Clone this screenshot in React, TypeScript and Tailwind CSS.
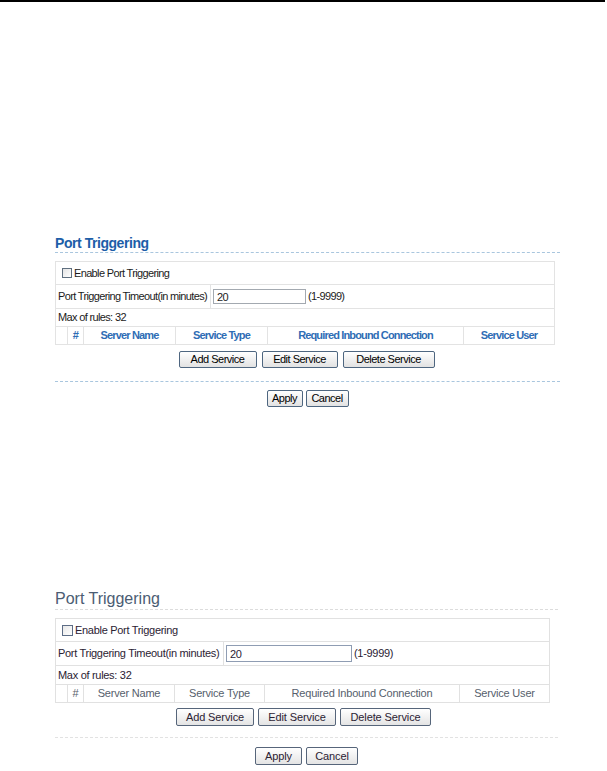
import type { ReactNode } from 'react'

type Look = {
  wrap: string
  title: string
  table: string
  text: string
  head: string
  cols: string
  labelCell: string
  input: string
  btnRow: string
  btn: string
  rule: string
  applyRow: string
  widths: { add: string; edit: string; del: string; apply: string; cancel: string }
  rows: { enable: string; timeout: string; max: string; head: string }
  check: string
  cell: string
}

const top: Look = {
  wrap: 'mt-[234px] w-[505px]',
  title:
    "h-[17px] border-b border-dashed border-[#a9c6de] font-['Liberation_Sans',Arial,sans-serif] text-[14px] font-bold leading-[14px] tracking-[-0.45px] text-[#1d5ea8]",
  table: 'mt-[8px] w-[500px] border border-[#e3e3e3]',
  text: "font-['Liberation_Sans',Arial,sans-serif] text-[11px] tracking-[-0.65px] text-[#1b1b1b]",
  head: "font-['Liberation_Sans',Arial,sans-serif] text-[11px] font-bold tracking-[-0.85px] text-[#2f6db5]",
  cols: 'grid grid-cols-[11px_16px_92px_92px_196px_1fr]',
  labelCell: 'w-[155px]',
  input: 'ml-[2px] h-[15px] w-[93px] border border-[#a3a9b0] px-[3px] text-[11px] leading-[13px]',
  btnRow: 'mt-[6px] flex w-[500px] justify-center gap-[5px] pl-[3px]',
  btn: "h-[17px] rounded-[2px] border border-[#4e6680] bg-gradient-to-b from-white to-[#e2e2e2] font-['Liberation_Sans',Arial,sans-serif] text-[11px] leading-[15px] tracking-[-0.5px] text-black",
  rule: 'mt-[13px] border-t border-dashed border-[#a9c6de]',
  applyRow: 'mt-[8px] flex justify-center gap-[3px]',
  widths: { add: 'w-[78px]', edit: 'w-[76px]', del: 'w-[92px]', apply: 'w-[36px]', cancel: 'w-[43px]' },
  rows: { enable: 'h-[22px]', timeout: 'h-[24px]', max: 'h-[18px]', head: 'h-[18px]' },
  check: 'h-[10px] w-[10px] border border-[#5f6f7f] bg-gradient-to-br from-[#e4e4e4] to-white',
  cell: 'border-[#e3e3e3]',
}

const bottom: Look = {
  wrap: 'mt-[183px] w-[503px]',
  title:
    "h-[20px] border-b border-dashed border-[#dcdcdc] font-['Liberation_Sans',Arial,sans-serif] text-[16px] leading-[18px] tracking-[0px] text-[#4b5d73]",
  table: 'mt-[8px] w-[495px] border border-[#e1e1e1]',
  text: "font-['Liberation_Sans',Arial,sans-serif] text-[11px] tracking-[-0.3px] text-[#2b2233]",
  head: "font-['Liberation_Sans',Arial,sans-serif] text-[11px] tracking-[-0.2px] text-[#56606c]",
  cols: 'grid grid-cols-[11px_16px_91px_90px_195px_1fr]',
  labelCell: 'w-[168px]',
  input: 'ml-[2px] h-[17px] w-[126px] border border-[#8f9db3] px-[3px] text-[11px] leading-[15px]',
  btnRow: 'mt-[5px] flex w-[495px] justify-center gap-[4px] pl-[2px]',
  btn: "h-[18px] rounded-[2px] border border-[#56657a] bg-gradient-to-b from-white to-[#e4e4e4] font-['Liberation_Sans',Arial,sans-serif] text-[11px] leading-[16px] tracking-[-0.1px] text-[#2b2233]",
  rule: 'mt-[11px] border-t border-dashed border-[#e2e2e2]',
  applyRow: 'mt-[9px] flex justify-center gap-[4px]',
  widths: { add: 'w-[78px]', edit: 'w-[78px]', del: 'w-[91px]', apply: 'w-[47px]', cancel: 'w-[52px]' },
  rows: { enable: 'h-[22px]', timeout: 'h-[24px]', max: 'h-[19px]', head: 'h-[18px]' },
  check: 'h-[11px] w-[11px] border border-[#5d6d86] bg-gradient-to-br from-[#e8e8e8] to-white',
  cell: 'border-[#e1e1e1]',
}

function Btn({ look, w, children }: { look: Look; w: string; children: ReactNode }) {
  return (
    <button type="button" className={`${look.btn} ${w}`}>
      {children}
    </button>
  )
}

function Panel({ look }: { look: Look }) {
  return (
    <section className={`ml-[55px] ${look.wrap}`}>
      <div className={look.title}>Port Triggering</div>
      <div className={look.table}>
        <div className={`flex items-center gap-[2px] pl-[6px] ${look.rows.enable} ${look.text}`}>
          <span className={look.check} />
          <span>Enable Port Triggering</span>
        </div>
        <div className={`flex items-center border-t ${look.cell} ${look.rows.timeout} ${look.text}`}>
          <div className={`flex h-full items-center border-r pl-[2px] ${look.cell} ${look.labelCell}`}>
            Port Triggering Timeout(in minutes)
          </div>
          <input className={`${look.input} ${look.text}`} defaultValue="20" readOnly />
          <span className="ml-[2px]">(1-9999)</span>
        </div>
        <div className={`flex items-center border-t pl-[2px] ${look.cell} ${look.rows.max} ${look.text}`}>
          Max of rules: 32
        </div>
        <div className={`${look.cols} border-t ${look.cell} ${look.rows.head} ${look.head}`}>
          <div />
          <div className={`flex items-center justify-center border-l ${look.cell}`}>#</div>
          <div className={`flex items-center justify-center border-l ${look.cell}`}>Server Name</div>
          <div className={`flex items-center justify-center border-l ${look.cell}`}>Service Type</div>
          <div className={`flex items-center justify-center border-l ${look.cell}`}>Required Inbound Connection</div>
          <div className={`flex items-center justify-center border-l ${look.cell}`}>Service User</div>
        </div>
      </div>
      <div className={look.btnRow}>
        <Btn look={look} w={look.widths.add}>Add Service</Btn>
        <Btn look={look} w={look.widths.edit}>Edit Service</Btn>
        <Btn look={look} w={look.widths.del}>Delete Service</Btn>
      </div>
      <div className={look.rule} />
      <div className={look.applyRow}>
        <Btn look={look} w={look.widths.apply}>Apply</Btn>
        <Btn look={look} w={look.widths.cancel}>Cancel</Btn>
      </div>
    </section>
  )
}

export default function App() {
  return (
    <div className="min-h-[771px] w-[607px] bg-white">
      <div className="h-[2px] w-[605px] bg-black" />
      <Panel look={top} />
      <Panel look={bottom} />
    </div>
  )
}
